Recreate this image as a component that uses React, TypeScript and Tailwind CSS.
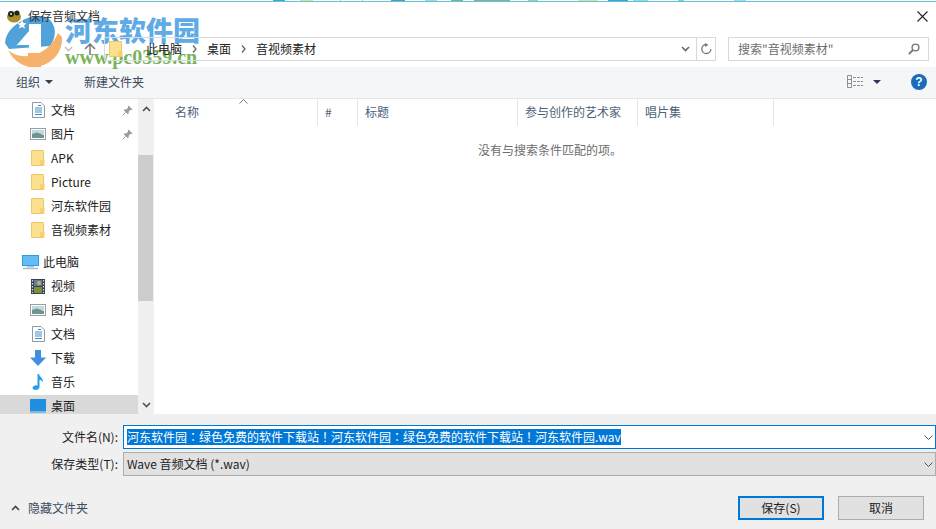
import { ReactNode } from "react";

// bits of the window behind, showing along the top edge
const strip: [number, string][] = [
  [273, "#ffffff"],
  [12, "#3ea3dc"],
  [15, "#ffffff"],
  [13, "#d8e09a"],
  [27, "#ffffff"],
  [1, "#9cc"],
  [21, "#ffffff"],
  [1, "#9cc"],
  [28, "#ffffff"],
  [14, "#5c93b8"],
  [20, "#ffffff"],
  [12, "#9fd8ee"],
  [14, "#ffffff"],
  [12, "#6fb58e"],
  [11, "#ffffff"],
  [36, "#8fa8a0"],
  [18, "#ffffff"],
  [10, "#9fd0a0"],
  [40, "#ffffff"],
  [20, "#d8e09a"],
  [10, "#ffffff"],
  [20, "#3ea3dc"],
  [5, "#ffffff"],
  [15, "#8fd8e8"],
  [30, "#ffffff"],
  [6, "#7fd0c8"],
  [50, "#ffffff"],
  [12, "#9fd8ee"],
];

const FolderIcon = () => (
  <svg width="14" height="16" viewBox="0 0 14 16">
    <path d="M0.5 0.5H12.5V15.5H0.5Z" fill="#fde08f" stroke="#ecc868" />
    <path d="M9 10.5L13.5 9.5V15.5H9Z" fill="#f7cf6e" />
  </svg>
);

const DocIcon = () => (
  <svg width="13" height="16" viewBox="0 0 13 16">
    <path d="M0.5 0.5H9L12.5 4V15.5H0.5Z" fill="#fff" stroke="#8f9aa5" />
    <path d="M6 3.5H9M3 6H10M3 8H10M3 10H10M3 12.5H10" stroke="#3f8fc9" strokeWidth="1" />
  </svg>
);

const PictureIcon = () => (
  <svg width="16" height="12" viewBox="0 0 16 12">
    <rect x="0.5" y="0.5" width="15" height="11" fill="#fff" stroke="#9a9fa5" />
    <rect x="2" y="2" width="12" height="4" fill="#c3d6e6" />
    <path d="M2 6L7 4.5L14 7V10H2Z" fill="#6d958e" />
  </svg>
);

const PinIcon = () => (
  <svg width="11" height="11" viewBox="0 0 11 11">
    <path d="M6.5 0.5L10.5 4.5L9.5 5.2L8.5 4.8L6.6 6.8L6.6 8.8L5.8 9.3L1.8 5.2L2.3 4.5L4.3 4.5L6.2 2.5L5.8 1.4Z" fill="#9a9a9a" />
    <path d="M3.5 7.5L0.5 10.5" stroke="#9a9a9a" />
  </svg>
);

const MonitorIcon = () => (
  <svg width="17" height="15" viewBox="0 0 17 15">
    <rect x="0" y="0" width="17" height="11" fill="#2f9be6" />
    <rect x="1" y="1" width="15" height="9" fill="#63bdf2" />
    <path d="M5 11H12V12.5H5Z" fill="#a9c6dc" />
    <path d="M1 13.5H16" stroke="#a5bccd" strokeWidth="1.4" />
  </svg>
);

const VideoIcon = () => (
  <svg width="14" height="15" viewBox="0 0 14 15">
    <rect width="14" height="15" fill="#3a4250" />
    <rect x="3" y="1" width="8" height="6" fill="#5d7fa8" />
    <rect x="3" y="8" width="8" height="6" fill="#7f8f3a" />
    <circle cx="8" cy="4" r="2" fill="#d6b33c" />
    <path d="M1.5 1V14M12.5 1V14" stroke="#d9dde2" strokeWidth="1.2" strokeDasharray="1.5 1.5" />
  </svg>
);

const DownloadIcon = () => (
  <svg width="16" height="16" viewBox="0 0 16 16">
    <path d="M5 0H11V7.5H16L8 16L0 7.5H5Z" fill="#3f8fdc" />
  </svg>
);

const MusicIcon = () => (
  <svg width="12" height="16" viewBox="0 0 12 16">
    <path d="M5.5 0H7C7.5 3 11.5 4 11 8.5C10 6.5 8.5 6 7.5 6V13C7.5 15 5.5 16 3.5 16C1.5 16 0.5 15 0.5 13.8C0.5 12 3.5 11 5.5 11.5Z" fill="#27a0e8" />
  </svg>
);

const DesktopIcon = () => (
  <svg width="16" height="14" viewBox="0 0 16 14">
    <rect width="16" height="12" fill="#1f8fe0" />
    <rect y="12" width="16" height="2" fill="#7fb8e0" />
  </svg>
);

const Chevron = ({ up, color = "#555" }: { up?: boolean; color?: string }) => (
  <svg width="9" height="6" viewBox="0 0 9 6">
    <path d={up ? "M1 5L4.5 1.5L8 5" : "M1 1L4.5 4.5L8 1"} fill="none" stroke={color} strokeWidth="1.6" />
  </svg>
);

const ThinChevron = () => (
  <svg width="9" height="5" viewBox="0 0 9 5">
    <path d="M0.5 0.5L4.5 4.5L8.5 0.5" fill="none" stroke="#555" />
  </svg>
);

const Crumb = () => (
  <svg width="5" height="8" viewBox="0 0 5 8" className="mx-[10px] shrink-0">
    <path d="M1 0.5L4 4L1 7.5" fill="none" stroke="#666" strokeWidth="1.3" />
  </svg>
);

const Caret = ({ color = "#3a3f4a" }: { color?: string }) => (
  <svg width="8" height="4" viewBox="0 0 8 4">
    <path d="M0 0H8L4 4Z" fill={color} />
  </svg>
);

const Row = ({
  icon,
  label,
  pin,
  selected,
  top,
}: {
  icon: ReactNode;
  label: string;
  pin?: boolean;
  selected?: boolean;
  top?: boolean;
}) => (
  <div className={`flex h-6 shrink-0 items-center pb-[2px] ${top ? "pl-[22px]" : "pl-[30px]"} ${selected ? "bg-[#d9d9d9]" : ""}`}>
    <span className={`flex h-4 items-center justify-center ${top ? "w-[17px]" : "w-4"}`}>{icon}</span>
    <span className={`${top ? "ml-1" : "ml-[5px]"} text-[#222]`}>{label}</span>
    {pin && (
      <span className="ml-auto mr-[5px] flex">
        <PinIcon />
      </span>
    )}
  </div>
);

const Header = ({ label, width }: { label: string; width: string }) => (
  <div className={`flex h-[27px] shrink-0 items-center border-r border-[#e5e5e5] pb-[2px] pl-[7px] text-[#4c607a] ${width}`}>{label}</div>
);

const Watermark = () => (
  <div className="pointer-events-none absolute left-0 top-0 flex opacity-90">
    <svg width="65" height="70" viewBox="0 0 65 70" className="shrink-0">
      <path d="M5 43C6 31 15 24 25 19C34 15 46 15 50 20C57 27 56 38 50 46L9 49Z" fill="#3f97d6" />
      <path d="M22 20L23.5 23L26.5 23.5L24 25.5L25 28.5L22 27L19 28.5L20 25.5L17.5 23.5L20.5 23Z" fill="#ffffff" />
      <path d="M16 46L29 31V24H41V52H29V45H16Z" fill="#ffffff" />
      <path d="M42 23H46C54 25 55 38 47 44H42V37H44C47 36 47 31 44 30H42Z" fill="#3f97d6" />
      <path d="M8 50C18 60 46 60 58 33L62 37C63 55 48 67 33 67C22 67 13 60 8 50Z" fill="#f6a95a" />
      <path d="M28 53H41V67H28Z" fill="#f6a95a" />
    </svg>
    <div className="flex flex-col pt-[15px]">
      <span className="text-[27px] font-black leading-[30px] text-[#4ea3e4] [font-family:'Noto_Sans_CJK_SC',sans-serif]">
        河东软件园
      </span>
      <span className="mt-[3px] text-[20px] font-bold leading-[18px] text-[#68ad4a] [font-family:'Liberation_Serif',serif]">
        www.pc0359.cn
      </span>
    </div>
  </div>
);

export default function App() {
  return (
    <div className="relative flex h-[529px] w-[936px] flex-col overflow-hidden bg-white text-[12px] text-[#222] [font-family:'Noto_Sans_CJK_SC','Noto_Sans',sans-serif]">
      <div className="flex h-px shrink-0">
        {strip.map(([w, c], i) => (
          <div key={i} className="h-px" style={{ width: w, backgroundColor: c }} />
        ))}
      </div>
      <div className="h-px shrink-0 bg-[#62c5d3]" />

      <Watermark />

      {/* title bar */}
      <div className="relative flex h-[31px] shrink-0 items-center pb-[3px] pl-[6px] pr-[4px]">
        <svg width="16" height="14" viewBox="0 0 16 14">
          <ellipse cx="8" cy="8" rx="7" ry="5.5" fill="#a98f2e" />
          <circle cx="5" cy="5" r="3" fill="#222" />
          <circle cx="11" cy="4" r="2.5" fill="#222" />
          <circle cx="5" cy="5" r="1" fill="#eee" />
        </svg>
        <span className="ml-[6px] text-[#333]">保存音频文档</span>
        <svg width="11" height="11" viewBox="0 0 11 11" className="ml-auto mr-[4px]">
          <path d="M0.5 0.5L10.5 10.5M10.5 0.5L0.5 10.5" stroke="#222" strokeWidth="1.1" />
        </svg>
      </div>

      {/* address row */}
      <div className="relative flex h-[34px] shrink-0 items-center pb-[3px] pl-[64px]">
        <Chevron color="#c4c4c4" />
        <svg width="12" height="12" viewBox="0 0 12 12" className="ml-[11px]">
          <path d="M6 12V1M1 6L6 1L11 6" fill="none" stroke="#777" strokeWidth="1.5" />
        </svg>
        <div className="ml-[8px] flex h-6 w-[612px] items-center border border-[#d9d9d9] pl-[4px]">
          <FolderIcon />
          <span className="ml-[23px] text-[#222]">此电脑</span>
          <Crumb />
          <span>桌面</span>
          <Crumb />
          <span>音视频素材</span>
          <span className="ml-auto flex w-[21px] justify-center">
            <Chevron color="#666" />
          </span>
          <span className="flex h-full w-[19px] items-center justify-center border-l border-[#d9d9d9]">
            <svg width="11" height="12" viewBox="0 0 11 12">
              <path d="M5 1.5A4.5 4.5 0 1 0 9.8 6" fill="none" stroke="#777" strokeWidth="1.3" />
              <path d="M4 0L7.5 2L4 4Z" fill="#777" />
            </svg>
          </span>
        </div>
        <div className="ml-[12px] flex h-6 w-[201px] items-center border border-[#d9d9d9] pl-[9px] pr-[8px] text-[#6d6d6d]">
          <span>搜索"音视频素材"</span>
          <svg width="12" height="12" viewBox="0 0 12 12" className="ml-auto">
            <circle cx="7.5" cy="4.5" r="3.4" fill="none" stroke="#777" strokeWidth="1.4" />
            <path d="M5 7L0.8 11.2" stroke="#777" strokeWidth="1.8" />
          </svg>
        </div>
      </div>

      {/* toolbar */}
      <div className="flex h-[32px] shrink-0 items-center border-b border-[#e5e5e5] bg-[#f5f6f7] pb-[2px] pl-[16px] text-[#3b4a5e]">
        <span>组织</span>
        <span className="ml-[5px] flex">
          <Caret />
        </span>
        <span className="ml-[31px]">新建文件夹</span>
        <svg width="16" height="13" viewBox="0 0 16 13" className="ml-auto">
          <path d="M0.5 0.5H4.5V12.5H0.5ZM0.5 4.5H4.5M0.5 8.5H4.5" fill="none" stroke="#8f8f8f" />
          <path d="M6 2.5H16M6 6.5H16M6 10.5H16" stroke="#8f8f8f" strokeDasharray="3 1" />
        </svg>
        <span className="ml-[10px] flex">
          <Caret color="#2c3a58" />
        </span>
        <span className="ml-[30px] mr-[9px] flex h-4 w-4 items-center justify-center rounded-full bg-[#1a6cbb] text-[12px] font-bold leading-none text-white [font-family:'Liberation_Sans',sans-serif]">
          ?
        </span>
      </div>

      {/* nav + list */}
      <div className="flex min-h-0 flex-1">
        <div className="flex w-[138px] shrink-0 flex-col overflow-hidden">
          <Row icon={<DocIcon />} label="文档" pin />
          <Row icon={<PictureIcon />} label="图片" pin />
          <Row icon={<FolderIcon />} label="APK" />
          <Row icon={<FolderIcon />} label="Picture" />
          <Row icon={<FolderIcon />} label="河东软件园" />
          <Row icon={<FolderIcon />} label="音视频素材" />
          <div className="h-2 shrink-0" />
          <Row icon={<MonitorIcon />} label="此电脑" top />
          <Row icon={<VideoIcon />} label="视频" />
          <Row icon={<PictureIcon />} label="图片" />
          <Row icon={<DocIcon />} label="文档" />
          <Row icon={<DownloadIcon />} label="下载" />
          <Row icon={<MusicIcon />} label="音乐" />
          <Row icon={<DesktopIcon />} label="桌面" selected />
        </div>

        {/* scrollbar */}
        <div className="flex w-[16px] shrink-0 flex-col bg-[#f0f0f0]">
          <div className="flex h-[56px] shrink-0 items-start justify-center pt-[7px]">
            <Chevron up color="#505050" />
          </div>
          <div className="h-[146px] w-[15px] shrink-0 bg-[#cdcdcd]" />
          <div className="mt-auto flex h-[17px] shrink-0 items-center justify-center pb-[2px]">
            <Chevron color="#505050" />
          </div>
        </div>

        <div className="relative flex min-w-0 flex-1 flex-col pl-[1px]">
          <div className="flex shrink-0 pl-[13px]">
            <Header label="名称" width="w-[150px]" />
            <Header label="#" width="w-[40px]" />
            <Header label="标题" width="w-[160px]" />
            <Header label="参与创作的艺术家" width="w-[120px]" />
            <Header label="唱片集" width="w-[136px]" />
          </div>
          <span className="absolute left-[85px] top-0">
            <svg width="9" height="5" viewBox="0 0 9 5">
              <path d="M0.5 4.5L4.5 0.5L8.5 4.5" fill="none" stroke="#777" />
            </svg>
          </span>
          <div className="mt-[15px] pl-[323px] text-[#6d6d6d]">没有与搜索条件匹配的项。</div>
        </div>
      </div>

      {/* bottom panel */}
      <div className="flex h-[115px] shrink-0 flex-col bg-[#f0f0f0]">
        <div className="mt-[11px] flex h-6 items-center">
          <span className="w-[118px] text-right text-[#222]">文件名(N):</span>
          <div className="ml-[5px] flex h-6 flex-1 items-center border border-[#0078d7] bg-white pl-[3px]">
            <span className="bg-[#0078d7] leading-[16px] text-white [font-family:'Noto_Sans_CJK_TC','Noto_Sans',sans-serif]">
              河东软件园：绿色免费的软件下载站！河东软件园：绿色免费的软件下载站！河东软件园.wav
            </span>
            <span className="ml-auto mr-[2px] flex">
              <ThinChevron />
            </span>
          </div>
        </div>
        <div className="mt-[3px] flex h-6 items-center">
          <span className="w-[118px] text-right text-[#222]">保存类型(T):</span>
          <div className="ml-[5px] flex h-6 flex-1 items-center border border-[#adadad] bg-[#e1e1e1] pl-[3px] text-[#222]">
            <span>Wave 音频文档 (*.wav)</span>
            <span className="ml-auto mr-[2px] flex">
              <ThinChevron />
            </span>
          </div>
        </div>
        <div className="mt-[20px] flex h-6 items-center pl-[11px] pr-[12px]">
          <Chevron up color="#444" />
          <span className="ml-[8px] text-[#3b4a5e]">隐藏文件夹</span>
          <button className="ml-auto flex h-6 w-[86px] items-center justify-center border-2 border-[#0078d7] bg-[#e1e1e1] text-[#222]">
            保存(S)
          </button>
          <button className="ml-[14px] flex h-6 w-[86px] items-center justify-center border border-[#adadad] bg-[#e1e1e1] text-[#222]">
            取消
          </button>
        </div>
      </div>
    </div>
  );
}
